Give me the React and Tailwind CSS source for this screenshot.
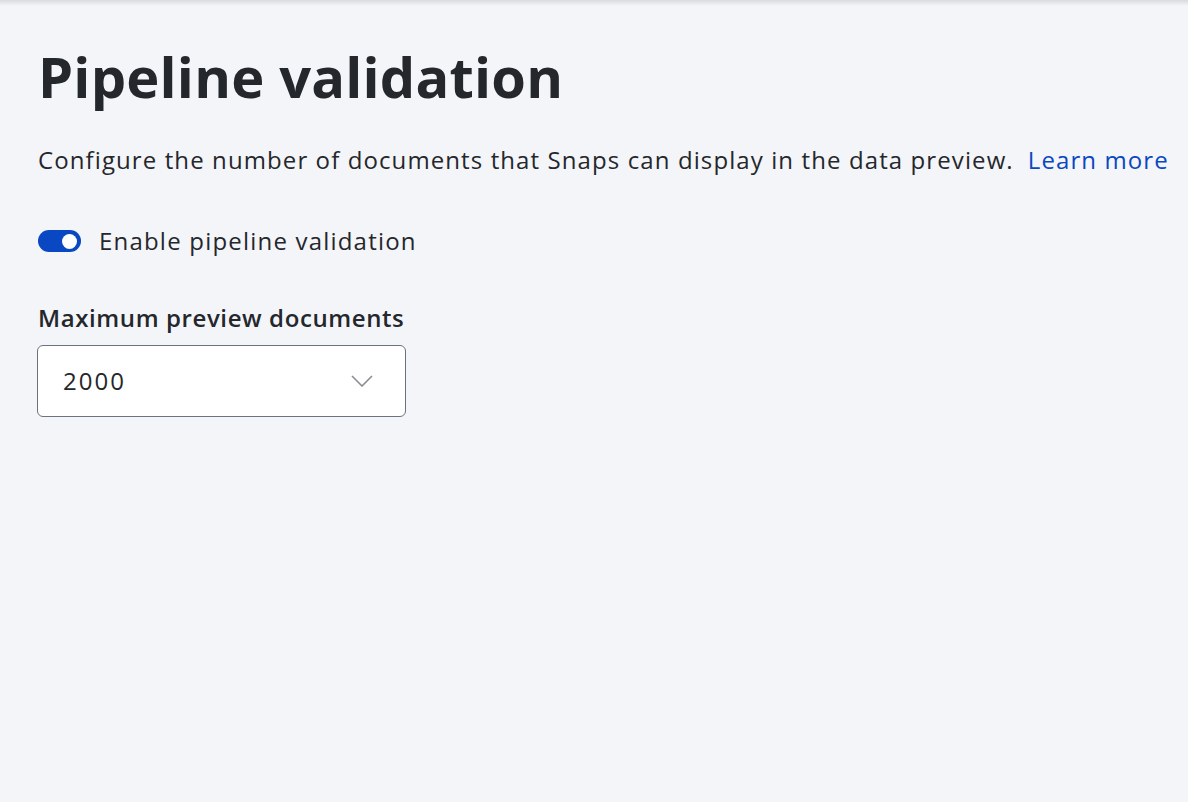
export default function App() {
  return (
    <div className="min-h-[802px] w-full bg-[#f4f5f9] relative" style={{ fontFamily: "'Open Sans', Lato, sans-serif" }}>
      <div className="absolute top-0 left-0 right-0 h-[6px] bg-gradient-to-b from-[#d9dadf] to-transparent" />
      <div className="pl-[38px] pt-[38px]">
        <h1 className="text-[56px] leading-[76px] font-bold text-[#24272c] tracking-[0.2px]">Pipeline validation</h1>
        <p className="mt-[30px] text-[24px] leading-[32px] text-[#24272c] tracking-[1.1px] whitespace-nowrap">
          Configure the number of documents that Snaps can display in the data preview.
          <span className="ml-[14px] text-[#0a47c2]">Learn more</span>
        </p>
        <div className="mt-[54px] flex items-center">
          <div className="w-[43px] h-[22px] rounded-full bg-[#0a47c2] flex items-center justify-end pr-[4px]">
            <div className="w-[15px] h-[15px] rounded-full bg-white" />
          </div>
          <span className="ml-[18px] text-[24px] leading-[22px] text-[#24272c] tracking-[1.2px]">Enable pipeline validation</span>
        </div>
        <div className="mt-[50px] text-[24px] font-semibold leading-[32px] text-[#24272c] tracking-[0.6px]">Maximum preview documents</div>
        <div className="mt-[11px] -ml-[1px] w-[369px] h-[72px] bg-white border border-[#6b7280] rounded-[6px] flex items-center justify-between pl-[25px] pr-[32px]">
          <span className="text-[24px] text-[#24272c] tracking-[2px]">2000</span>
          <svg width="22" height="12" viewBox="0 0 22 12" fill="none">
            <path d="M1 1 L11 11 L21 1" stroke="#8a8d93" strokeWidth="1.6" />
          </svg>
        </div>
      </div>
    </div>
  );
}
